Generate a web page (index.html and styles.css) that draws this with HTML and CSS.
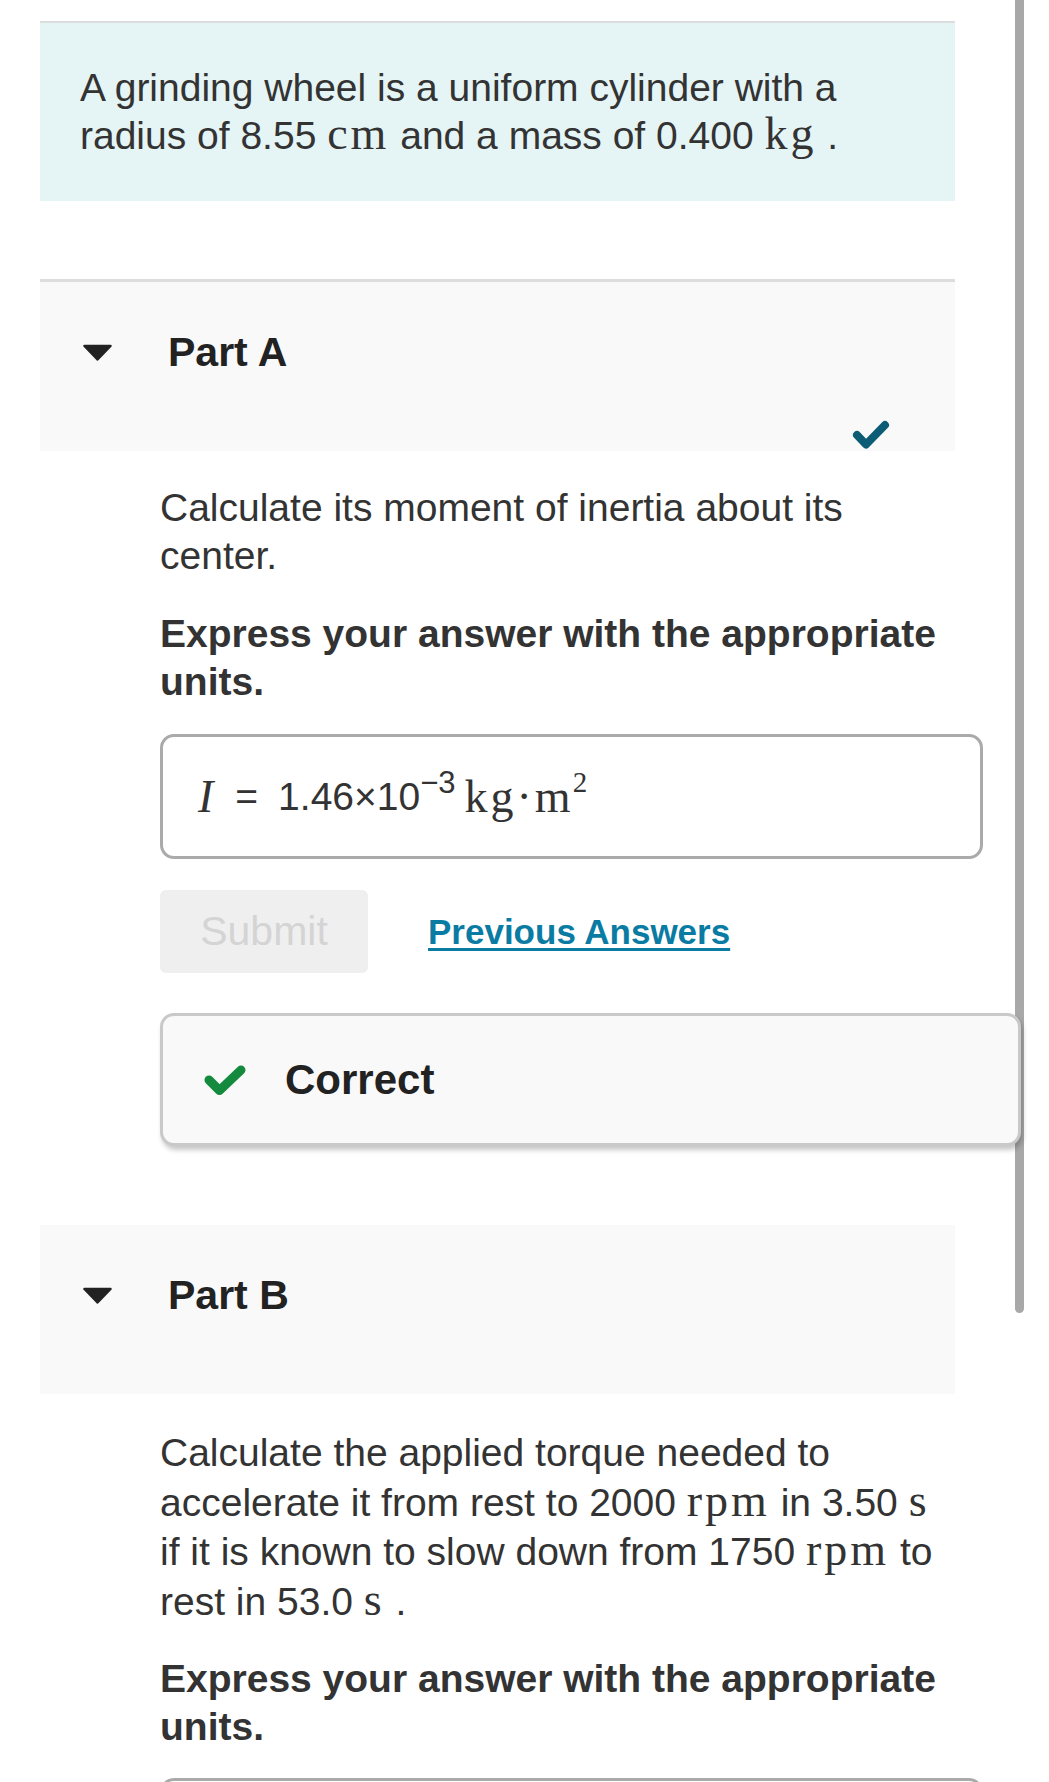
FILE: index.html
```html
<!DOCTYPE html>
<html lang="en">
<head>
<meta charset="utf-8">
<title>Grinding wheel</title>
<link rel="stylesheet" href="styles.css">
</head>
<body>
<div class="scrollbar"></div>
<main class="page">
  <section class="problem">
    <p>A grinding wheel is a uniform cylinder with a radius of 8.55 <span class="m">cm</span> and a mass of 0.400 <span class="m">kg</span> .</p>
  </section>

  <section class="part">
    <header class="part-header bordered">
      <div class="title-row">
        <svg class="caret" viewBox="0 0 31 17"><path d="M2.5 2 H28.5 L15.5 15.5 Z" fill="#222" stroke="#222" stroke-width="2.5" stroke-linejoin="round"/></svg>
        <h2>Part A</h2>
      </div>
      <div class="status-row">
        <svg class="done" viewBox="0 0 38 29"><path d="M5 15 L14 24.5 L33 5" fill="none" stroke="#0c5c75" stroke-width="8" stroke-linecap="round" stroke-linejoin="round"/></svg>
      </div>
    </header>
    <div class="part-body">
      <p class="q">Calculate its moment of inertia about its center.</p>
      <p class="q strong">Express your answer with the appropriate units.</p>
      <div class="answer">
        <span class="m mi">I</span><span class="eq">=</span><span class="val">1.46×10<span class="sup">−3</span></span><span class="m unit">kg·m<span class="sup2">2</span></span>
      </div>
      <div class="actions">
        <button class="submit" type="button">Submit</button>
        <a class="prev" href="#">Previous Answers</a>
      </div>
      <div class="feedback">
        <svg class="ok" viewBox="0 0 44 32"><path d="M6 16 L16.5 26.5 L38 6" fill="none" stroke="#138a3d" stroke-width="9" stroke-linecap="round" stroke-linejoin="round"/></svg>
        <span class="fb-text">Correct</span>
      </div>
    </div>
  </section>

  <section class="part part-b">
    <header class="part-header">
      <div class="title-row">
        <svg class="caret" viewBox="0 0 31 17"><path d="M2.5 2 H28.5 L15.5 15.5 Z" fill="#222" stroke="#222" stroke-width="2.5" stroke-linejoin="round"/></svg>
        <h2>Part B</h2>
      </div>
      <div class="status-row"></div>
    </header>
    <div class="part-body body-b">
      <p class="q">Calculate the applied torque needed to accelerate it from rest to 2000 <span class="m">rpm</span> in 3.50 <span class="m">s</span> if it is known to slow down from 1750 <span class="m">rpm</span> to rest in 53.0 <span class="m">s</span> .</p>
      <p class="q strong">Express your answer with the appropriate units.</p>
      <div class="answer empty"></div>
    </div>
  </section>
</main>
</body>
</html>
```

FILE: styles.css
```css
html, body {
  margin: 0;
  padding: 0;
  background: #ffffff;
}

body {
  font-family: "Liberation Sans", Arial, Helvetica, sans-serif;
  color: #333333;
  width: 1049px;
  overflow: hidden;
}

.scrollbar {
  position: absolute;
  top: 0;
  left: 1015px;
  width: 9px;
  height: 1313px;
  background: #a8a8a8;
  border-radius: 0 0 5px 5px;
  z-index: 0;
}

.page {
  padding: 21px 0 0 40px;
  width: 915px;
}

.problem {
  border-top: 2px solid #dcdcdc;
  background: #e5f4f5;
  padding: 41px 40px;
  margin-bottom: 78px;
}

.problem p {
  margin: 0;
  font-size: 39px;
  line-height: 48px;
}

.m {
  font-family: "Liberation Serif", "Times New Roman", serif;
  font-size: 46px;
  line-height: 36px;
  letter-spacing: 3px;
}

.part-header {
  background: #f9f9f9;
  padding: 46px 65px 0 42px;
  display: flex;
  flex-direction: column;
}

.part-header.bordered {
  border-top: 3px solid #dddddd;
}

.title-row {
  display: flex;
  align-items: center;
  gap: 55px;
  height: 48px;
}

.caret {
  width: 31px;
  height: 17px;
  display: block;
}

.title-row h2 {
  margin: 0;
  font-size: 41px;
  line-height: 48px;
  font-weight: bold;
  color: #222222;
}

.status-row {
  height: 31px;
  margin-top: 44px;
  display: flex;
  justify-content: flex-end;
  align-items: flex-start;
}

.done {
  width: 38px;
  height: 29px;
  display: block;
}

.part-body {
  padding: 33px 0 0 120px;
}

.q {
  margin: 0;
  font-size: 39px;
  line-height: 48px;
  max-width: 785px;
}

.q + .q {
  margin-top: 30px;
}

.strong {
  font-weight: bold;
}

.body-b {
  padding-top: 34px;
}

.body-b .q {
  line-height: 49.5px;
}

.body-b .q + .q {
  margin-top: 28.5px;
  line-height: 48px;
}

.answer {
  margin-top: 28px;
  width: 823px;
  height: 125px;
  box-sizing: border-box;
  border: 3px solid #aaaaaa;
  border-radius: 14px;
  display: flex;
  align-items: center;
  padding-left: 35px;
  font-size: 39px;
  color: #333333;
  background: #ffffff;
}

.mi {
  font-style: italic;
  letter-spacing: 0;
}

.eq {
  margin: 0 20px 0 22px;
}

.sup {
  font-size: 31px;
  position: relative;
  top: -17px;
  line-height: 0;
}

.unit {
  margin-left: 9px;
}

.sup2 {
  font-size: 29px;
  position: relative;
  top: -20px;
  line-height: 0;
  margin-left: -1px;
  letter-spacing: 0;
}

.actions {
  margin-top: 31px;
  display: flex;
  align-items: center;
  gap: 60px;
}

.submit {
  width: 208px;
  height: 83px;
  border: 0;
  border-radius: 6px;
  background: #efefef;
  color: #d4d4d4;
  font-family: "Liberation Sans", Arial, Helvetica, sans-serif;
  font-size: 41px;
  padding: 0;
}

.prev {
  font-size: 35px;
  font-weight: bold;
  color: #0a7ca3;
  text-decoration: underline;
  text-decoration-thickness: 3px;
  text-underline-offset: 4px;
}

.feedback {
  margin-top: 40px;
  position: relative;
  z-index: 1;
  width: 861px;
  height: 133px;
  box-sizing: border-box;
  border: 3px solid #c9c9c9;
  border-radius: 14px;
  background: #f9f9f9;
  box-shadow: 2px 4px 5px rgba(0, 0, 0, 0.22);
  display: flex;
  align-items: center;
  padding-left: 40px;
  gap: 38px;
}

.ok {
  width: 44px;
  height: 32px;
  display: block;
}

.fb-text {
  font-size: 42px;
  font-weight: bold;
  color: #222222;
}

.part-b {
  margin-top: 79px;
}

.answer.empty {
  margin-top: 27.5px;
}
```
